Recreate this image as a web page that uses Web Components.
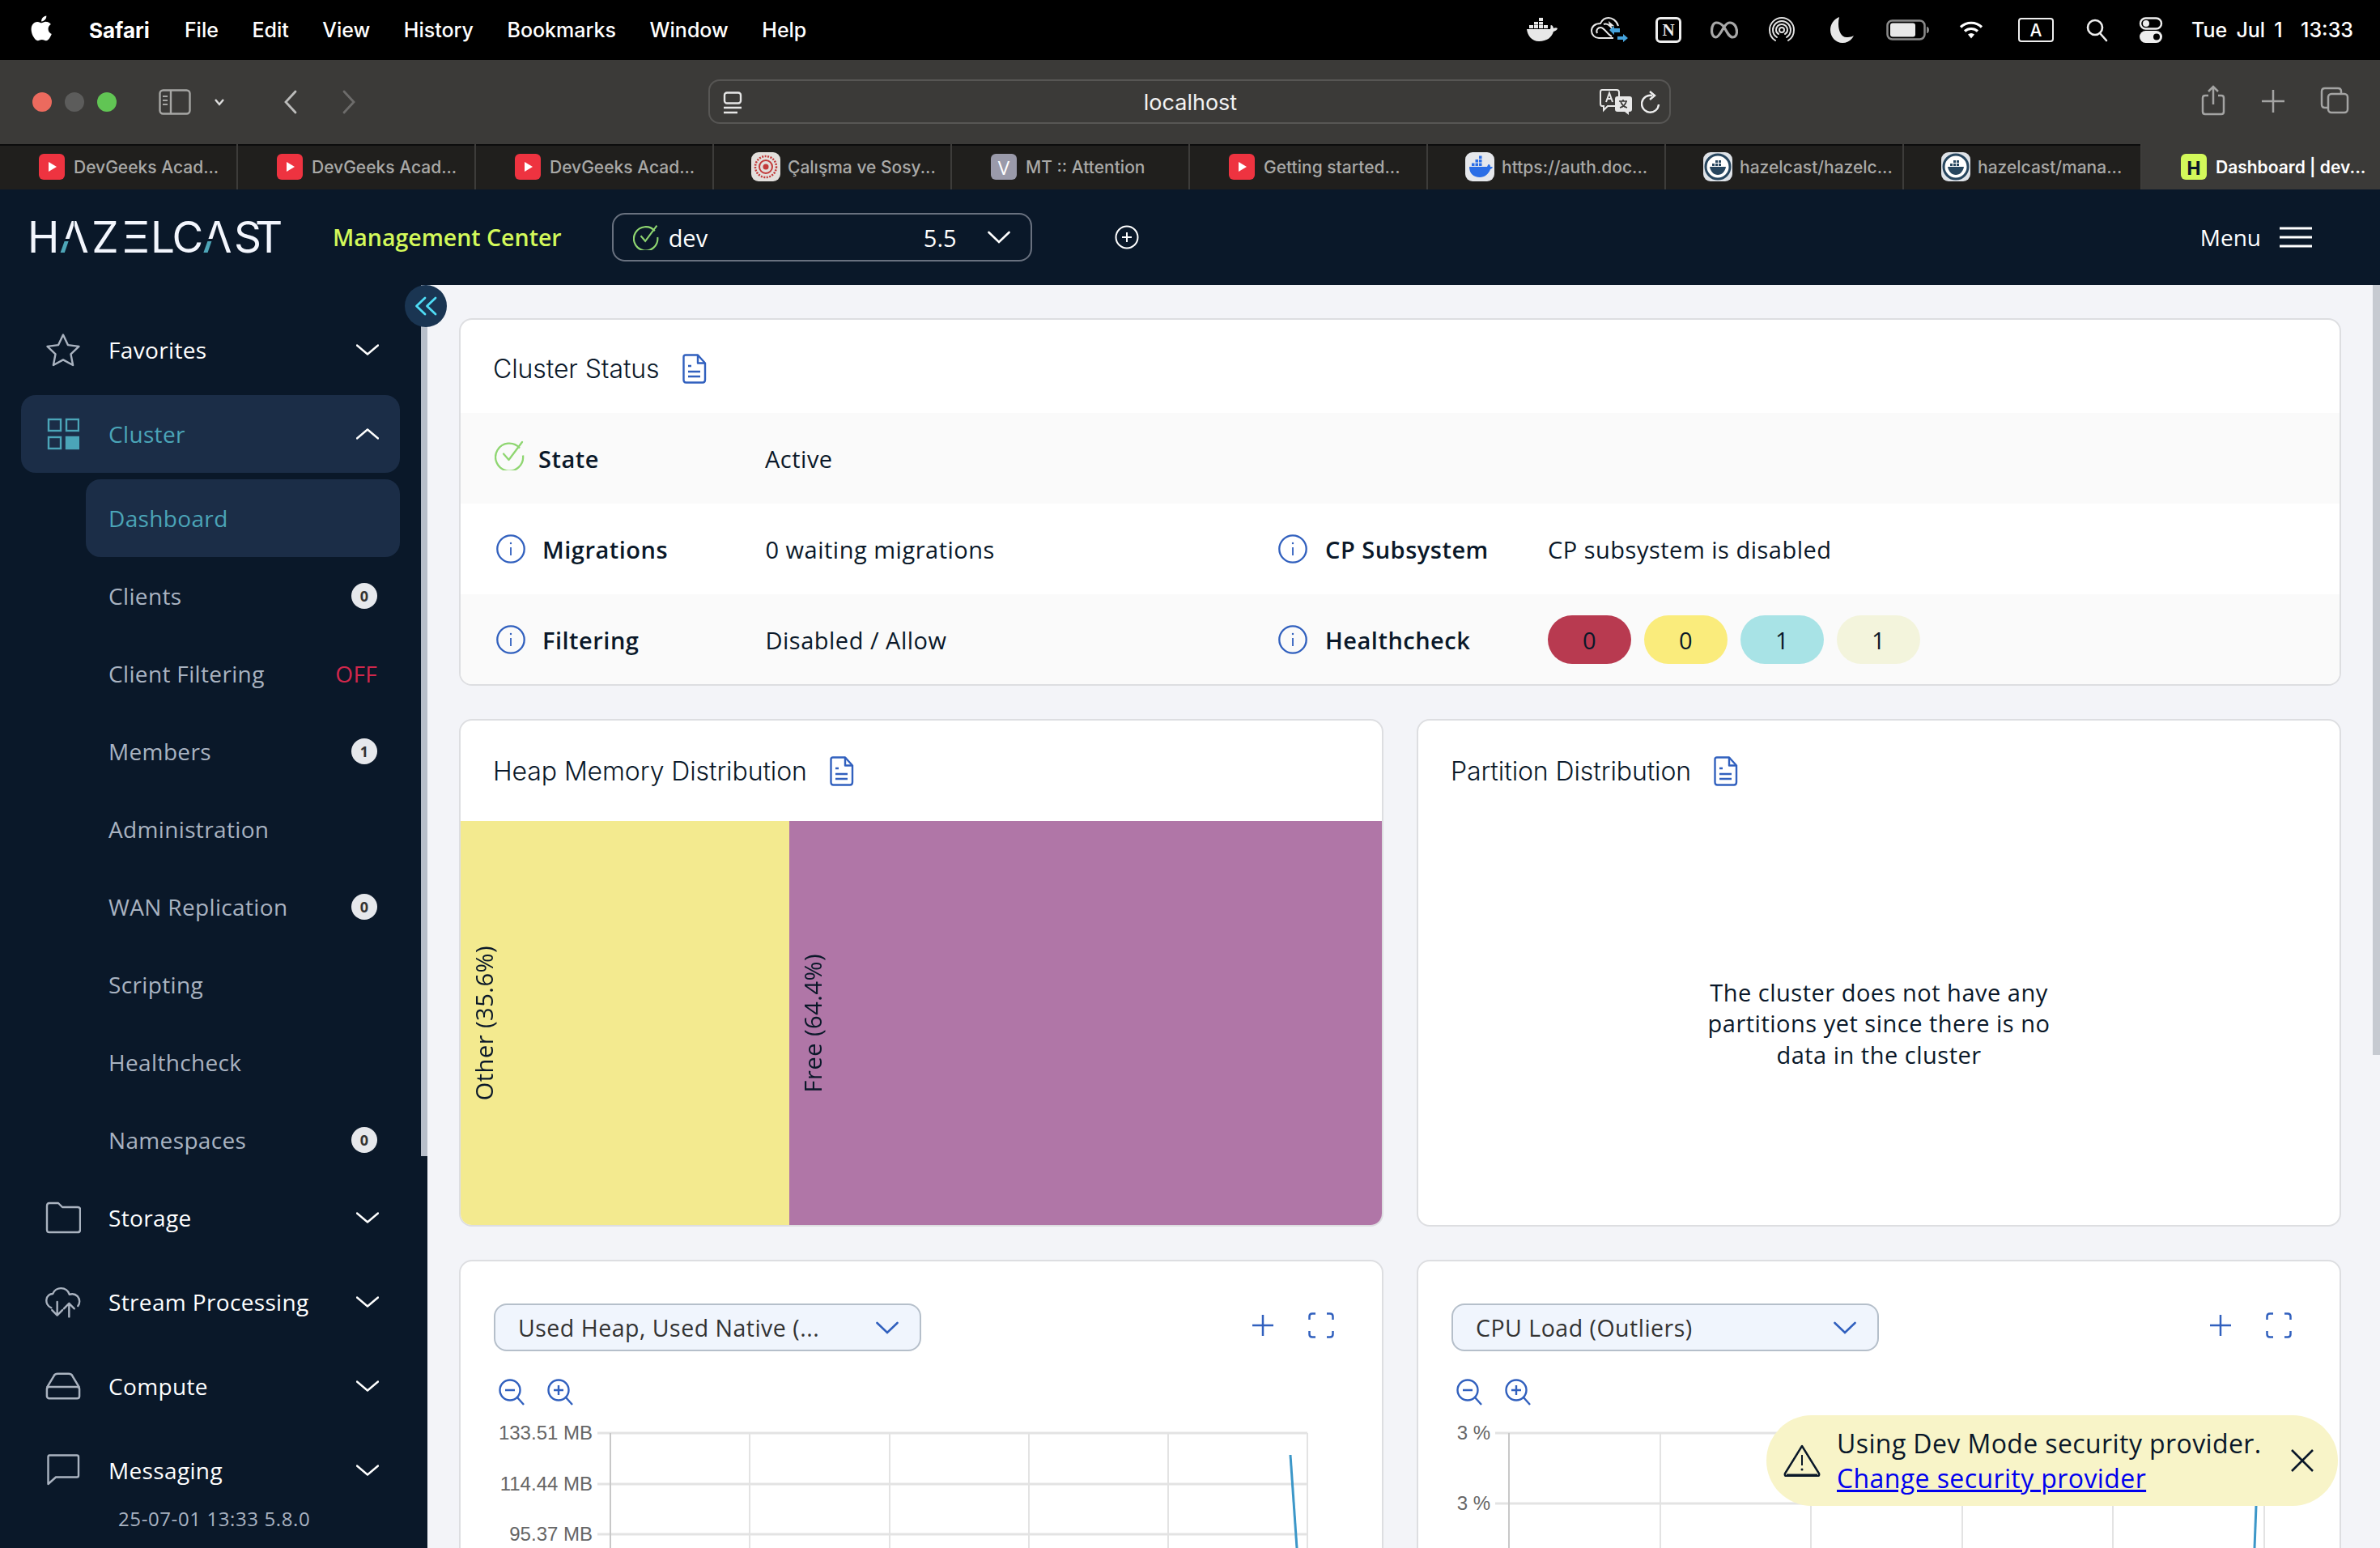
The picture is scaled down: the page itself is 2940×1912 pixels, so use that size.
<!DOCTYPE html>
<html lang="en"><head><meta charset="utf-8"><title>Dashboard | dev</title>
<style>
html,body{margin:0;padding:0;background:#f3f4f8;overflow:hidden;height:1912px;font-family:"Open Sans",sans-serif}
</style></head><body>
<app-shell>
  <mac-menubar></mac-menubar>
  <safari-toolbar></safari-toolbar>
  <safari-tabs></safari-tabs>
  <app-header></app-header>
  <app-body>
    <side-nav>
      <nav-item label="Favorites" icon="star" chev="down"></nav-item>
      <nav-item label="Cluster" icon="grid" chev="up" active></nav-item>
      <nav-item label="Dashboard" sub active></nav-item>
      <nav-item label="Clients" sub><nav-badge>0</nav-badge></nav-item>
      <nav-item label="Client Filtering" sub><nav-off>OFF</nav-off></nav-item>
      <nav-item label="Members" sub><nav-badge>1</nav-badge></nav-item>
      <nav-item label="Administration" sub></nav-item>
      <nav-item label="WAN Replication" sub><nav-badge>0</nav-badge></nav-item>
      <nav-item label="Scripting" sub></nav-item>
      <nav-item label="Healthcheck" sub></nav-item>
      <nav-item label="Namespaces" sub><nav-badge>0</nav-badge></nav-item>
      <nav-item label="Storage" icon="folder" chev="down"></nav-item>
      <nav-item label="Stream Processing" icon="cloud" chev="down" gap></nav-item>
      <nav-item label="Compute" icon="server" chev="down" gap></nav-item>
      <nav-item label="Messaging" icon="chat" chev="down" gap></nav-item>
    </side-nav>
    <main-area>
      <status-card></status-card>
      <dash-card title="Heap Memory Distribution"><heap-map></heap-map></dash-card>
      <dash-card title="Partition Distribution"><empty-note>The cluster does not have any partitions yet since there is no data in the cluster</empty-note></dash-card>
      <chart-card value="Used Heap, Used Native (..." kind="heap"></chart-card>
      <chart-card value="CPU Load (Outliers)" kind="cpu"></chart-card>
    </main-area>
    <dev-toast></dev-toast>
  </app-body>
</app-shell>
<script>
const svg=(w,h,vb,body,extra='')=>`<svg xmlns="http://www.w3.org/2000/svg" width="${w}" height="${h}" viewBox="${vb}" fill="none" ${extra}>${body}</svg>`;
const BLUE='#3160be', GREY='#aab3c0';
const icons={
 star:svg(44,42,'0 0 44 42',`<path d="M22 2.500l5.900 12.600 13.600 1.800-10 9.500 2.600 13.600L22 33.400 9.900 40l2.600-13.600-10-9.500 13.600-1.800z" stroke="${GREY}" stroke-width="2.400" stroke-linejoin="round"/>`),
 grid:svg(40,40,'0 0 40 40',`<g stroke="#4ba5b8" stroke-width="2.400"><rect x="2" y="2" width="15" height="14"/><rect x="24" y="2" width="15" height="14"/><rect x="2" y="24" width="15" height="14"/><rect x="24" y="24" width="15" height="14" fill="#4ba5b8"/></g>`),
 folder:svg(44,40,'0 0 44 40',`<path d="M2 5.500Q2 2 5 2h11l5 5h19q3 0 3 3v25q0 3-3 3H5q-3 0-3-3z" stroke="${GREY}" stroke-width="2.400" stroke-linejoin="round"/>`),
 cloud:svg(48,41,'0 0 48 41',`<g stroke="${GREY}" stroke-width="2.600" stroke-linecap="round" stroke-linejoin="round"><path d="M8 28C3 26 1 21 1.500 17 2 12 6 9 10 9 12 4 17 1.500 21 1.500c6 0 10 4 11.500 8.500 4-1.500 8-.5 11 2.500 3 3.500 3.500 9 .5 13"/><path d="M16 20v18M9 31l7 7 7-7"/><path d="M32 40V22M25 29l7-7 7 7"/></g>`),
 server:svg(46,36,'0 0 46 36',`<g stroke="${GREY}" stroke-width="2.600" stroke-linejoin="round"><path d="M2 20L11 5q1-3 5-3h14q4 0 5 3l9 15"/><rect x="2" y="19" width="42" height="15" rx="3"/></g>`),
 chat:svg(42,42,'0 0 42 42',`<path d="M4 2.500h34q2 0 2 2v23q0 2-2 2H12L2.500 38V4.500q0-2 1.500-2z" stroke="${GREY}" stroke-width="2.400" stroke-linejoin="round"/>`),
 down:svg(28,14,'0 0 28 14',`<path d="M1 1.500l13 11 13-11" stroke="#fff" stroke-width="2.400" stroke-linecap="round" stroke-linejoin="round"/>`),
 up:svg(28,14,'0 0 28 14',`<path d="M1 12.500l13-11 13 11" stroke="#fff" stroke-width="2.400" stroke-linecap="round" stroke-linejoin="round"/>`),
 doc:svg(30,37,'0 0 30 37',`<g stroke="${BLUE}" stroke-width="2.400" stroke-linejoin="round"><path d="M4 1.500h15l9 10V32q0 3.500-3 3.500H4.500q-3 0-3-3.500V4q0-2.500 2.500-2.500z"/><path d="M19 1.500v10h9"/><path d="M7 15h4M7 22h15M7 28h15" stroke-width="2.600"/></g>`),
 info:svg(36,36,'0 0 36 36',`<circle cx="18" cy="18" r="16.700" stroke="${BLUE}" stroke-width="2.300"/><path d="M18 16v10" stroke="${BLUE}" stroke-width="1.800"/><circle cx="18" cy="11" r="1.200" fill="${BLUE}"/>`),
 check:svg(37,37,'0 0 37 37',`<path d="M31 9.500A17 17 0 1 0 35 18.500" stroke="#8fd671" stroke-width="2.300"/><path d="M11 16.500l6.500 7.500L34 2" stroke="#8fd671" stroke-width="2.300" stroke-linecap="round" stroke-linejoin="round"/>`)
};
function def(name,css,html,init){
  customElements.define(name,class extends HTMLElement{
    connectedCallback(){
      if(this.shadowRoot)return;
      const r=this.attachShadow({mode:'open'});
      r.innerHTML=`<style>${css}</style>`+(typeof html==='function'?html(this):html);
      if(init)init(this,r);
    }
  });
}
def('app-shell',':host{display:flex;flex-direction:column;width:2940px;height:1912px;overflow:hidden;position:relative}','<slot></slot>');

/* ---- macOS menu bar ---- */
def('mac-menubar',`:host{display:flex;align-items:center;height:74px;background:#000;color:#fff;font:500 25px Inter,sans-serif;flex:none}
 .apple{margin-left:37px;margin-right:43px;margin-top:-4px;display:flex}
 .m{margin-right:41.500px;white-space:nowrap}.b{font-weight:700;font-size:26px;margin-right:43px}
 .r{margin-left:auto;display:flex;align-items:center;padding-right:33px}
 .r svg{display:block;flex:none}
 .n{border:3px solid #eee;border-radius:6px;width:26px;height:26px;display:flex;align-items:center;justify-content:center;font:700 21px "Liberation Serif",serif;color:#eee;box-sizing:content-box;background:#000}
 .a{border:2.500px solid #eee;border-radius:4px;width:40px;height:26px;display:flex;align-items:center;justify-content:center;font:500 21px Inter,sans-serif;margin-left:43px}
 .t{margin-left:35px;white-space:nowrap;font-size:25px;word-spacing:4.500px}`,
 ()=>`<span class="apple">${svg(30,34,'2 1 20 22','<path fill="#fff" d="M17.050 12.540c-.030-2.600 2.130-3.850 2.220-3.910-1.210-1.770-3.090-2.010-3.760-2.040-1.600-.160-3.120.940-3.930.940-.810 0-2.060-.920-3.390-.890-1.740.030-3.350 1.010-4.250 2.570-1.810 3.140-.460 7.790 1.300 10.340.860 1.250 1.890 2.650 3.240 2.600 1.300-.050 1.790-.840 3.360-.840 1.570 0 2.010.840 3.390.810 1.400-.020 2.280-1.270 3.140-2.530.990-1.450 1.400-2.850 1.420-2.930-.030-.010-2.720-1.040-2.740-4.120zM14.460 4.900c.720-.870 1.200-2.080 1.070-3.290-1.030.040-2.290.690-3.030 1.550-.660.770-1.250 2-1.090 3.180 1.150.090 2.330-.580 3.050-1.440z"/>')}</span>
 <span class="m b">Safari</span><span class="m">File</span><span class="m">Edit</span><span class="m">View</span><span class="m">History</span><span class="m">Bookmarks</span><span class="m">Window</span><span class="m">Help</span>
 <div class="r">
 ${svg(38,30,'0 0 38 30','<path fill="#e8e8e8" d="M0 14h29c1-2 0-5 1-5 2 0 3 3 3 4 2-1 4-1 5 0-1 3-3 3-5 4-2 7-8 12-18 12C6 29 1 22 0 14z"/><g fill="#e8e8e8"><rect x="3" y="9" width="5" height="4"/><rect x="9" y="9" width="5" height="4"/><rect x="15" y="9" width="5" height="4"/><rect x="21" y="9" width="5" height="4"/><rect x="9" y="5" width="5" height="3.500"/><rect x="15" y="5" width="5" height="3.500"/><rect x="15" y="0" width="5" height="4"/></g>')}
 <span style="margin-left:41px">${svg(46,32,'0 0 46 32','<g stroke="#e8e8e8" stroke-width="2" fill="none"><path d="M34 11C32 4 26 1 22 1 15 1 13 6 12 8 5 8 1 12 1 17c0 5 4 9 9 9h18"/><path d="M8 20c-2-4 1-7 4-7 5 0 8 8 14 11M16 9c4-2 9 2 12 8"/></g><path fill="#e8e8e8" d="M22 5l7 6-6 1z"/><path fill="#45a3dc" d="M23 16l6-5v3h7v5h-7v3zM33 24h7v-3l6 5-6 5v-3h-7z"/>')}</span>
 <span class="n" style="margin-left:34px">N</span>
 ${svg(34,22,'0 0 34 22','<path d="M7 2c-3 0-5.500 4-5.500 10 0 4 2 8 5 8 4 0 7-8 10.500-13 2-3 4-5 7-5 5 0 8.500 5 8.500 11 0 4-2 7-5 7-5 0-8-8-11-13C14 4 11 2 7 2z" stroke="#a8a8a8" stroke-width="3.200" fill="none"/>','style="margin-left:36px"')}
 ${svg(32,32,'0 0 32 32','<g stroke="#e0e0e0" stroke-width="2" fill="none" stroke-linecap="round"><path d="M8 29C3 26 1 21 1 16a15 15 0 0 1 30 0c0 5-2 10-7 13"/><path d="M10 25c-3-2-5-5-5-9a11 11 0 0 1 22 0c0 4-2 7-5 9"/><path d="M12 21c-2-1-3-3-3-5a7 7 0 0 1 14 0c0 2-1 4-3 5"/><circle cx="16" cy="16" r="3"/></g>','style="margin-left:38px"')}
 ${svg(29,32,'0 0 29 32','<path fill="#e8e8e8" d="M11 0C4 3 0 9 0 16c0 9 7 16 15 16 6 0 11-3 14-9-3 2-6 2-9 2C12 25 8 13 11 0z"/>','style="margin-left:44px"')}
 ${svg(54,26,'0 0 54 26','<rect x="1.500" y="1.500" width="46" height="23" rx="6" stroke="#8a8a8a" stroke-width="2.500" fill="none"/><rect x="5" y="4.500" width="31" height="17" rx="3" fill="#e8e8e8"/><path d="M50 9c2 0 3 2 3 4s-1 4-3 4z" fill="#8a8a8a"/>','style="margin-left:40px"')}
 ${svg(30,24,'0 0 30 24','<g stroke="#fff" stroke-width="3.200" fill="none"><path d="M2 8.500c7-7 19-7 26 0"/><path d="M7 13.500c4.500-4 11.500-4 16 0"/></g><path fill="#fff" d="M11 17.500c2.500-2 5.500-2 8 0l-4 5z"/>','style="margin-left:36px"')}
 <span class="a">A</span>
 ${svg(28,30,'0 0 28 30','<g stroke="#eee" stroke-width="2.600" fill="none"><circle cx="12" cy="12" r="9"/><path d="M18 19l8 9" stroke-linecap="round"/></g>','style="margin-left:39px"')}
 ${svg(30,32,'0 0 30 32','<rect x="2" y="1.500" width="26" height="13" rx="6.500" stroke="#eee" stroke-width="2.400" fill="none"/><circle cx="9" cy="8" r="4" fill="#eee"/><rect x="1" y="17" width="28" height="15" rx="7.500" fill="#eee"/><circle cx="22" cy="24.500" r="4" fill="#000"/>','style="margin-left:38px"')}
 <span class="t">Tue Jul 1&nbsp;&nbsp;13:33</span>
 </div>`);

/* ---- Safari toolbar ---- */
def('safari-toolbar',`:host{display:flex;align-items:center;height:104px;background:#3b3a38;flex:none;position:relative;font-family:Inter,sans-serif}
 .tl{display:flex;gap:16px;margin-left:40px}.tl i{width:24px;height:24px;border-radius:50%;display:block}
 svg{display:block;flex:none}
 .addr{position:absolute;left:875px;top:24px;width:1189px;height:55px;box-sizing:border-box;border:2px solid #575654;border-radius:14px;display:flex;align-items:center;justify-content:center;color:#f2f2f2;font-size:27px;padding:2px 0 0 2px}
 .addr .l{position:absolute;left:16px;top:13px}.addr .tr{position:absolute;right:46px;top:10px}.addr .rl{position:absolute;right:11px;top:12px}
 .right{position:absolute;left:2718px;top:31px;display:flex;align-items:flex-start;gap:0}`,
 ()=>`<div class="tl"><i style="background:#ec6a5e"></i><i style="background:#5c5c5b"></i><i style="background:#61c554"></i></div>
 <span style="margin-left:52px">${svg(40,32,'0 0 40 32','<rect x="1.500" y="1.500" width="37" height="29" rx="4" stroke="#a6a6a4" stroke-width="2.400" fill="none"/><path d="M15 2v28" stroke="#a6a6a4" stroke-width="2.400"/><path d="M5 9h6M5 14h6M5 19h6" stroke="#a6a6a4" stroke-width="2"/>')}</span>
 <span style="margin-left:28px">${svg(14,10,'0 0 14 10','<path d="M2 2l5 6 5-6" stroke="#ddd" stroke-width="2.400" fill="none"/>')}</span>
 <span style="margin-left:72px">${svg(18,30,'0 0 18 30','<path d="M15 2L3 15l12 13" stroke="#bcbcbb" stroke-width="2.800" fill="none" stroke-linecap="round"/>')}</span>
 <span style="margin-left:54px">${svg(18,30,'0 0 18 30','<path d="M3 2l12 13L3 28" stroke="#6d6c6b" stroke-width="2.800" fill="none" stroke-linecap="round"/>')}</span>
 <div class="addr"><span class="l">${svg(24,28,'0 0 24 28','<rect x="2" y="1.500" width="20" height="13" rx="3" stroke="#e6e6e6" stroke-width="2.400" fill="none"/><path d="M1 20h22M1 26h17" stroke="#e6e6e6" stroke-width="2.400"/>')}</span>localhost
  <span class="tr">${svg(40,32,'0 0 40 32','<path d="M3 1h18q3 0 3 3v14q0 3-3 3H10l-5 5v-5H3q-2 0-2-3V4q0-3 2-3z" stroke="#e8e8e8" stroke-width="2" fill="#3b3a38"/><path d="M8 16l4-11 4 11M9.500 12h5" stroke="#e8e8e8" stroke-width="2" fill="none"/><path d="M22 9h15q3 0 3 3v13q0 3-3 3h-1v4l-5-4H22q-3 0-3-3V12q0-3 3-3z" fill="#e8e8e8"/><path d="M24 15h10M29 13v2M26 15c1 4 4 7 8 8M33 15c-1 4-4 7-8 8" stroke="#3b3a38" stroke-width="1.700" fill="none"/>')}</span>
  <span class="rl">${svg(24,30,'0 0 24 30','<path d="M14 6A10.500 10.500 0 1 0 22 17" stroke="#eee" stroke-width="2.400" fill="none"/><path d="M11 1l6 5-6 5" stroke="#eee" stroke-width="2.400" fill="none"/>')}</span>
 </div>
 <div class="right">
  ${svg(32,38,'0 0 32 38','<path d="M10 13H6q-3 0-3 3v17q0 3 3 3h20q3 0 3-3V16q0-3-3-3h-4M16 24V2M10 8l6-6 6 6" stroke="#a4a4a3" stroke-width="2.500" fill="none"/>')}
  <span style="margin-left:44px;margin-top:6px">${svg(28,28,'0 0 28 28','<path d="M14 0v28M0 14h28" stroke="#a4a4a3" stroke-width="2.500"/>')}</span>
  <span style="margin-left:44px;margin-top:2px">${svg(36,34,'0 0 36 34','<rect x="10" y="9" width="24" height="23" rx="4" stroke="#a4a4a3" stroke-width="2.500" fill="none"/><path d="M10 26H6q-4 0-4-4V6q0-4 4-4h16q4 0 4 4v3" stroke="#a4a4a3" stroke-width="2.500" fill="none"/>')}</span>
 </div>`);

/* ---- Tabs ---- */
const yt=`<span class="fav" style="background:#ee3340">${svg(32,32,'0 0 32 32','<path d="M12 10l10 6-10 6z" fill="#fff"/>')}</span>`;
const dock=(c,bg='#dfe3e8')=>`<span class="fav tall" style="background:${bg}">${svg(36,36,'0 0 36 36',`<path fill="${c}" d="M5 18h22c1-2 1-3 2-3 1 0 2 1 2 3 1 0 2 0 3 .5-1 2-2 2-3 2.500-2 6-7 10-13 10C10 31 5 26 5 18z"/><g fill="${c}"><rect x="8" y="13.500" width="3.500" height="3.500"/><rect x="12.500" y="13.500" width="3.500" height="3.500"/><rect x="17" y="13.500" width="3.500" height="3.500"/><rect x="12.500" y="9" width="3.500" height="3.500"/><rect x="17" y="9" width="3.500" height="3.500"/><rect x="17" y="4.500" width="3.500" height="3.500"/></g>`)}</span>`;
const hz=`<span class="fav tall" style="background:#dfe3e8">${svg(36,36,'0 0 36 36','<circle cx="18" cy="18" r="15" stroke="#27465f" stroke-width="3" fill="#fff"/><path fill="#27465f" d="M8 18h20c-1 6-5 10-10 10S9 24 8 18z"/><g fill="#27465f"><rect x="11" y="14" width="3" height="3"/><rect x="15" y="14" width="3" height="3"/><rect x="19" y="14" width="3" height="3"/><rect x="15" y="10" width="3" height="3"/><rect x="19" y="10" width="3" height="3"/></g>')}</span>`;
const tabs=[
 [yt,'DevGeeks Acad...'],[yt,'DevGeeks Acad...'],[yt,'DevGeeks Acad...'],
 [`<span class="fav tall" style="background:#e3dfdc">${svg(36,36,'0 0 36 36','<circle cx="18" cy="18" r="13" stroke="#c23a3a" stroke-width="2.500" fill="none" stroke-dasharray="2 1.500"/><circle cx="18" cy="18" r="8" stroke="#c23a3a" stroke-width="2" fill="none"/><circle cx="18" cy="18" r="3.500" fill="#c23a3a"/>')}</span>`,'Çalışma ve Sosy...'],
 [`<span class="fav" style="background:#9a9aaa;color:#fff;font:500 24px 'Open Sans',sans-serif">V</span>`,'MT :: Attention'],
 [yt,'Getting started...'],
 [dock('#2b6ee6','#e6e8ec'),'https://auth.doc...'],
 [hz,'hazelcast/hazelc...'],[hz,'hazelcast/mana...'],
 [`<span class="fav" style="background:#d3f95a;color:#0a1829;font:700 24px 'Open Sans',sans-serif">H</span>`,'Dashboard | dev...',1]
];
def('safari-tabs',`:host{display:flex;height:56px;background:#201f1d;flex:none;font:500 21px Inter,sans-serif;color:#a9a9a7;box-shadow:inset 0 2px 0 #0c0c0c}
 .tab{width:294px;flex:none;box-sizing:border-box;border-right:2px solid #3d3c3a;display:flex;align-items:center;padding-left:48px;white-space:nowrap;overflow:hidden}
 .tab.on{background:#3b3a38;color:#fff;font-weight:600;border-right:0;flex:1;box-shadow:0 -2px 0 #3b3a38;padding-left:48px}
 .fav{width:32px;height:32px;border-radius:6px;flex:none;display:flex;align-items:center;justify-content:center;margin-right:11px;overflow:hidden}
 .fav.tall{width:36px;height:36px;border-radius:9px;margin-left:-2px;margin-right:9px}
 svg{display:block}`,
 ()=>tabs.map(t=>`<div class="tab${t[2]?' on':''}">${t[0]}<span>${t[1]}</span></div>`).join(''));

/* ---- App header ---- */
const logo=[['H',-.2],['Λ',3.5,1],['Z',3.75],['Ξ',.75],['L',-3.35],['C',-1.35],['Λ',2.5,1],['S',-8],['T',0]];
def('app-header',`:host{display:flex;align-items:center;height:118px;background:#0a1829;flex:none;color:#fff;position:relative;font-family:"Open Sans",sans-serif}
 .logo{flex:none;margin-left:34px;width:313px;height:46px;font:400 53px/46px Inter,sans-serif;color:#f3f6fd;white-space:nowrap;font-kerning:none}
 .lam{display:inline-block;color:transparent;background:linear-gradient(#f3f6fd 54%,transparent 54% 60%,#4ea6b8 60%) left/46.500% 100% no-repeat,linear-gradient(#f3f6fd,#f3f6fd) right/53.500% 100% no-repeat;-webkit-background-clip:text;background-clip:text}
 .mc{margin-left:64px;font-weight:600;font-size:28.500px;color:#d3f95a;white-space:nowrap}
 .sel{margin-left:62px;width:519px;height:60px;box-sizing:border-box;border:2px solid #69717f;border-radius:16px;display:flex;align-items:center;font-size:29px;padding:0 25px 0 24px}
 .sel .d{margin-left:12px}.sel .v{margin-left:auto;margin-right:38px}
 .add{margin-left:102px;display:flex}
 .menu{margin-left:auto;margin-right:84px;display:flex;align-items:center;font-size:28px;gap:23px}
 svg{display:block;flex:none}`,
 ()=>`<div class="logo" role="img" aria-label="Hazelcast">${logo.map(l=>`<span ${l[2]?'class="lam"':''} style="letter-spacing:${l[1]}px">${l[0]}</span>`).join('')}</div>
  <span class="mc">Management Center</span>
  <div class="sel">${svg(32,32,'0 0 37 37','<path d="M31 9.500A17 17 0 1 0 35 18.500" stroke="#8fd671" stroke-width="2.400" fill="none"/><path d="M11 16.500l6.500 7.500L34 2" stroke="#8fd671" stroke-width="2.400" fill="none"/>')}<span class="d">dev</span><span class="v">5.5</span>${svg(28,16,'0 0 28 16','<path d="M1.500 2L14 14 26.500 2" stroke="#fff" stroke-width="2.600" fill="none" stroke-linecap="round"/>')}</div>
  <span class="add">${svg(30,30,'0 0 30 30','<circle cx="15" cy="15" r="13.500" stroke="#fff" stroke-width="2" fill="none"/><path d="M15 9v12M9 15h12" stroke="#fff" stroke-width="2"/>')}</span>
  <div class="menu"><span>Menu</span>${svg(40,26,'0 0 40 26','<path d="M0 2h40M0 13h40M0 24h40" stroke="#fff" stroke-width="3"/>')}</div>`);

def('app-body',':host{display:flex;flex:1;min-height:0;position:relative}','<slot></slot>');

/* ---- Sidebar ---- */
def('side-nav',`:host{display:flex;width:528px;flex:none;background:#0a1829;position:relative}
 .list{width:520px;box-sizing:border-box;padding:32px 26px 0;display:flex;flex-direction:column}
 .bar{width:8px;height:1076px;background:#b8bfca;flex:none}
 .ver{padding-left:120px;margin-top:-13px;height:48px;display:flex;align-items:center;font-size:24px;letter-spacing:.6px;color:#a9b3c1;white-space:pre}
 .col{position:absolute;left:500px;top:0;width:52px;height:52px;border-radius:50%;background:#1a3552;display:flex;align-items:center;justify-content:center;z-index:3}`,
 ()=>`<div class="list"><slot></slot><div class="ver">25-07-01 13:33 5.8.0</div></div><div class="bar"></div>
 <div class="col">${svg(28,24,'0 0 28 24','<path d="M13 2L2.500 12 13 22M26 2L15.500 12 26 22" stroke="#4fdcf5" stroke-width="2.800" fill="none" stroke-linecap="round" stroke-linejoin="round"/>')}</div>`);
def('nav-item',`:host{display:flex;align-items:center;height:96px;flex:none;box-sizing:border-box;padding-left:30px;padding-right:26px;border-radius:18px;font-size:28px;letter-spacing:.35px;color:#fff}
 :host([sub]){margin-left:80px;padding-left:28px;padding-right:28px;color:#a9b3c1}
 :host([active]){background:#1b2d47;color:#4ba5b8}
 :host([gap]){margin-top:8px}
 :host([icon="grid"]){margin:8px 0}
 .ic{width:44px;height:44px;margin-right:34px;display:flex;align-items:center;justify-content:center;flex:none}
 .l{white-space:nowrap}.s{margin-left:auto;display:flex;align-items:center}
 svg{display:block}`,
 h=>{const ic=h.getAttribute('icon'),ch=h.getAttribute('chev');
  return (ic?`<span class="ic">${icons[ic]}</span>`:'')+`<span class="l">${h.getAttribute('label')}</span><span class="s"><slot></slot>${ch?icons[ch]:''}</span>`});
def('nav-badge',`:host{display:flex;width:32px;height:32px;border-radius:50%;background:#e6e8ec;color:#333;font:700 18px "Open Sans",sans-serif;letter-spacing:0;align-items:center;justify-content:center}`,'<slot></slot>');
def('nav-off',`:host{display:block;color:#d2274c;font-size:28px}`,'<slot></slot>');

/* ---- Main ---- */
def('main-area',`:host{display:flex;flex:1;min-width:0;overflow:hidden;background:#f3f4f8}
 .in{flex:1;min-width:0;box-sizing:border-box;padding:41px 39px 0 39px;display:grid;grid-template-columns:1142px 1fr;column-gap:41px;row-gap:41px;align-content:start}
 .bar{width:9px;height:951px;background:#c6cad1;flex:none}
 ::slotted(status-card){grid-column:1/3}`,
 `<div class="in"><slot></slot></div><div class="bar"></div>`);
const cardCss=`:host{display:block;background:#fff;border:2px solid #dddee1;border-radius:16px;box-sizing:border-box;color:#0a1829;font-family:"Open Sans",sans-serif;overflow:hidden}
 .h{display:flex;align-items:center;box-sizing:border-box;height:115px;padding-left:40px;gap:28px;font:300 32px Inter,sans-serif;letter-spacing:-.1px;white-space:nowrap}
 svg{display:block;flex:none}`;
def('status-row',`:host{display:grid;grid-template-columns:1008px 1fr;height:112px;align-items:center;font-size:29px;letter-spacing:.5px}
 :host([alt]){background:#fafafa}`,'<slot></slot>');
def('status-cell',`:host{display:flex;align-items:center;height:100%;white-space:nowrap}
 .ic{width:36px;height:36px;flex:none;margin-left:44px;margin-right:21px}
 :host([right]) .ic{margin-left:2px;margin-right:22px}
 :host([st]) .ic{margin-right:18px;margin-top:-8px;margin-left:42px}
 b{font-weight:600;width:275.500px;flex:none;white-space:nowrap}
 :host([st]) b{width:280px}
 :host([right]) b{width:275px}
 svg{display:block}`,
 h=>`<span class="ic">${h.hasAttribute('st')?icons.check:icons.info}</span><b>${h.getAttribute('label')}</b><slot></slot>`);
def('status-card',cardCss+`:host{height:454px}.h{padding-top:6px}`,
 ()=>`<div class="h">Cluster Status ${icons.doc}</div>
 <status-row alt><status-cell st label="State">Active</status-cell></status-row>
 <status-row><status-cell label="Migrations">0 waiting migrations</status-cell><status-cell right label="CP Subsystem">CP subsystem is disabled</status-cell></status-row>
 <status-row alt><status-cell label="Filtering">Disabled / Allow</status-cell><status-cell right label="Healthcheck"><hc-pills></hc-pills></status-cell></status-row>`);
def('hc-pills',`:host{display:flex;gap:16px;font-weight:500}
 i{font-style:normal;width:103px;height:60px;border-radius:30px;display:flex;align-items:center;justify-content:center;color:#0a1829}`,
 `<i style="background:#b83a50">0</i><i style="background:#faec7c">0</i><i style="background:#a8e3e6">1</i><i style="background:#f3f4dc">1</i>`);
def('dash-card',cardCss+`:host{height:627px;display:flex;flex-direction:column}.h{height:124px;flex:none}.b{flex:1;min-height:0;display:flex}::slotted(*){flex:1}`,
 h=>`<div class="h">${h.getAttribute('title')} ${icons.doc}</div><div class="b"><slot></slot></div>`);
def('heap-map',`:host{display:flex;font:400 29px "Open Sans",sans-serif;letter-spacing:.5px;color:#0a1829}
 .c{display:flex;align-items:center}
 .c span{writing-mode:vertical-rl;transform:rotate(180deg);white-space:nowrap;margin-left:9px}`,
 `<div class="c" style="width:406px;background:#f3ea8f"><span>Other (35.6%)</span></div><div class="c" style="flex:1;background:#b076a7"><span>Free (64.4%)</span></div>`);
def('empty-note',`:host{display:flex;align-items:center;justify-content:center;padding-top:2px}
 p{margin:0;width:450px;text-align:center;font-size:29px;line-height:38.500px;letter-spacing:.5px;color:#0a1829}`,'<p><slot></slot></p>');
def('chart-card',cardCss+`:host{height:600px;position:relative}
 .top{display:flex;align-items:center;padding:52px 0 0 41px}
 .sel{width:528px;height:59px;box-sizing:border-box;background:#f0f5fd;border:2px solid #b5bfca;border-radius:16px;display:flex;align-items:center;justify-content:space-between;padding:0 26px 0 28px;font-size:28.500px;letter-spacing:.5px;color:#333;white-space:nowrap}
 .act{margin-left:auto;margin-top:-6px;display:flex;align-items:center;gap:42px;padding-right:59px}
 .zoom{display:flex;gap:28px;padding:34px 0 0 47px}
 .ch{margin-top:4px}`,
 h=>{const heap=h.getAttribute('kind')==='heap';
  const xs=heap?[185,357,530,702,874,1046]:[112,299,485,672,858,1045];
  const ys=heap?[30,93,155]:[30,117];
  const labs=heap?['133.51 MB','114.44 MB','95.37 MB']:['3 %','3 %'];
  const lx=heap?169:95;
  const line=heap?'M1025 57L1033 172':'M1035 120L1033 172';
  return `<div class="top"><div class="sel"><span>${h.getAttribute('value')}</span>${svg(28,16,'0 0 28 16',`<path d="M1.500 2L14 14 26.500 2" stroke="${BLUE}" stroke-width="2.600" fill="none" stroke-linecap="round"/>`)}</div>
  <div class="act">${svg(28,28,'0 0 28 28',`<path d="M14 1v26M1 14h26" stroke="${BLUE}" stroke-width="2.500"/>`)}${svg(32,32,'0 0 32 32',`<path d="M9 1.500H5Q1.500 1.500 1.500 5v4M23 1.500h4q3.500 0 3.500 3.500v4M9 30.500H5Q1.500 30.500 1.500 27v-4M23 30.500h4q3.500 0 3.500-3.500v-4" stroke="${BLUE}" stroke-width="2.500" fill="none"/>`)}</div></div>
  <div class="zoom">${svg(32,33,'0 0 32 33',`<circle cx="14" cy="14" r="12.500" stroke="${BLUE}" stroke-width="2.400" fill="none"/><path d="M23 23l8 9" stroke="${BLUE}" stroke-width="2.400"/><path d="M8 14h12" stroke="${BLUE}" stroke-width="2.600"/>`)}${svg(32,33,'0 0 32 33',`<circle cx="14" cy="14" r="12.500" stroke="${BLUE}" stroke-width="2.400" fill="none"/><path d="M23 23l8 9" stroke="${BLUE}" stroke-width="2.400"/><path d="M8 14h12M14 8v12" stroke="${BLUE}" stroke-width="2.400"/>`)}</div>
  <div class="ch"><svg xmlns="http://www.w3.org/2000/svg" width="1136" height="172" viewBox="0 0 1136 172" font-family="'Liberation Sans',sans-serif" font-size="24" fill="#666">
   ${ys.map(y=>`<path d="M${lx} ${y}H1046" stroke="#e3e3e3" stroke-width="3"/>`).join('')}
   ${xs.map((x,i)=>`<path d="M${x} 30V172" stroke="${i?'#e3e3e3':'#c8c8c8'}" stroke-width="2"/>`).join('')}
   ${ys.map((y,i)=>`<text x="${lx-6}" y="${y+8}" text-anchor="end">${labs[i]}</text>`).join('')}
   <path d="${line}" stroke="#3c97c8" stroke-width="3" fill="none"/>
  </svg></div>`});

/* ---- Toast ---- */
def('dev-toast',`:host{position:absolute;left:2182px;top:1396px;width:706px;height:112px;box-sizing:border-box;border-radius:56px;background:#f8f4c8;display:flex;align-items:center;padding-left:21px;color:#0a1829;font:400 32px/43px "Open Sans",sans-serif;z-index:5;letter-spacing:.4px}
 .t{margin-left:20px;white-space:nowrap}
 a{color:#0000ee;text-decoration:underline;display:block}
 .x{margin-left:auto;margin-right:30px;display:flex}
 svg{display:block;flex:none}`,
 ()=>`${svg(46,40,'0 0 46 40','<path d="M23 2L2 36q-1 3 2 3h38q3 0 2-3z" stroke="#0a1829" stroke-width="2.400" fill="none" stroke-linejoin="round"/><path d="M4 38h38" stroke="#0a1829" stroke-width="2.800"/><path d="M23 13v13" stroke="#0a1829" stroke-width="2"/><circle cx="23" cy="31" r="1.500" fill="#0a1829"/>')}
 <div class="t">Using Dev Mode security provider.<a>Change security provider</a></div>
 <span class="x">${svg(28,28,'0 0 28 28','<path d="M1 1l26 26M27 1L1 27" stroke="#0a1829" stroke-width="2.600"/>')}</span>`);
</script>
</body></html>
